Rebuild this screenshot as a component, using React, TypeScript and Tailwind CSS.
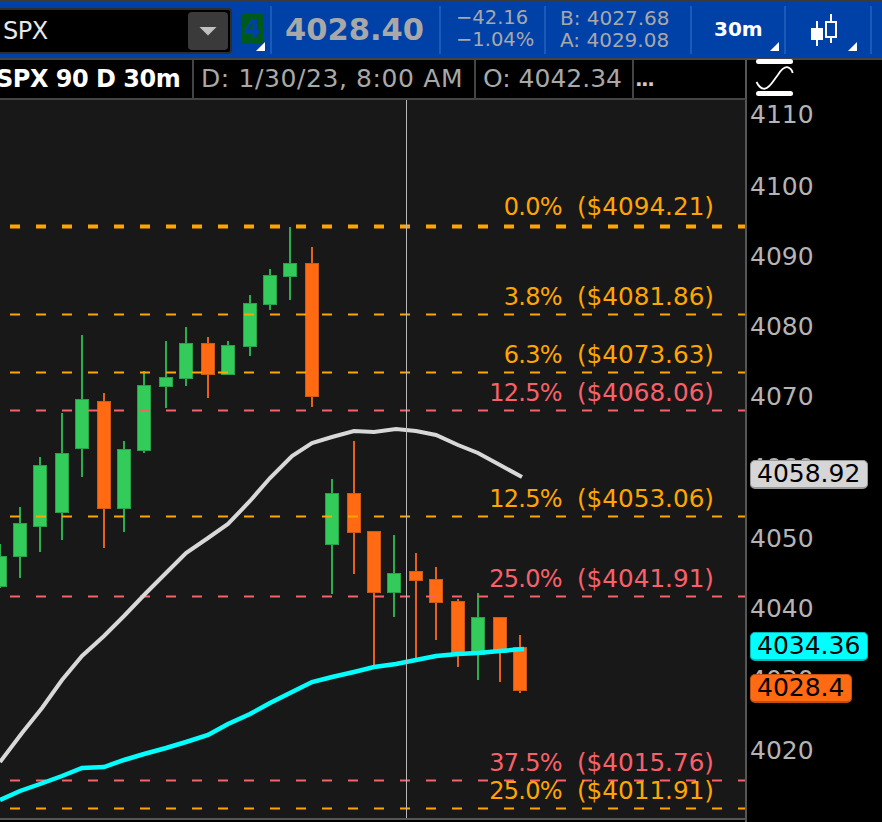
const FONT = "font-['DejaVu_Sans',sans-serif]";

type Candle = { x: number; up: boolean; wt: number; wb: number; bt: number; bb: number };

const candles: Candle[] = [
  { x: 0, up: true, wt: 544, wb: 588, bt: 556, bb: 587 },
  { x: 20, up: true, wt: 507, wb: 578, bt: 523, bb: 557 },
  { x: 40, up: true, wt: 457, wb: 552, bt: 465, bb: 527 },
  { x: 62, up: true, wt: 413, wb: 540, bt: 453, bb: 513 },
  { x: 82, up: true, wt: 335, wb: 477, bt: 399, bb: 449 },
  { x: 104, up: false, wt: 393, wb: 548, bt: 401, bb: 509 },
  { x: 124, up: true, wt: 441, wb: 532, bt: 449, bb: 509 },
  { x: 144, up: true, wt: 371, wb: 453, bt: 385, bb: 451 },
  { x: 166, up: true, wt: 341, wb: 408, bt: 377, bb: 387 },
  { x: 186, up: true, wt: 327, wb: 386, bt: 343, bb: 379 },
  { x: 208, up: false, wt: 337, wb: 398, bt: 343, bb: 375 },
  { x: 228, up: true, wt: 341, wb: 375, bt: 345, bb: 375 },
  { x: 250, up: true, wt: 295, wb: 356, bt: 303, bb: 347 },
  { x: 270, up: true, wt: 269, wb: 310, bt: 275, bb: 305 },
  { x: 290, up: true, wt: 227, wb: 300, bt: 263, bb: 277 },
  { x: 312, up: false, wt: 247, wb: 407, bt: 263, bb: 397 },
  { x: 332, up: true, wt: 479, wb: 594, bt: 493, bb: 545 },
  { x: 354, up: false, wt: 441, wb: 574, bt: 493, bb: 533 },
  { x: 374, up: false, wt: 531, wb: 667, bt: 531, bb: 593 },
  { x: 394, up: true, wt: 535, wb: 617, bt: 573, bb: 593 },
  { x: 416, up: false, wt: 553, wb: 658, bt: 571, bb: 581 },
  { x: 436, up: false, wt: 567, wb: 640, bt: 579, bb: 603 },
  { x: 458, up: false, wt: 599, wb: 667, bt: 601, bb: 653 },
  { x: 478, up: true, wt: 593, wb: 680, bt: 617, bb: 655 },
  { x: 500, up: false, wt: 617, wb: 682, bt: 617, bb: 653 },
  { x: 520, up: false, wt: 635, wb: 693, bt: 647, bb: 691 },
];

const ORANGE = "#ffa500";
const RED = "#f8606a";

const fibLines = [
  { y: 226.5, color: ORANGE, w: 4 },
  { y: 314.5, color: ORANGE, w: 2 },
  { y: 372.5, color: ORANGE, w: 2 },
  { y: 410.5, color: RED, w: 2 },
  { y: 516.5, color: ORANGE, w: 2 },
  { y: 596.5, color: RED, w: 2 },
  { y: 780.5, color: RED, w: 2 },
  { y: 808.5, color: ORANGE, w: 2 },
];

const fibLabels = [
  { top: 207, pct: "0.0%", price: "($4094.21)", red: false },
  { top: 297, pct: "3.8%", price: "($4081.86)", red: false },
  { top: 355, pct: "6.3%", price: "($4073.63)", red: false },
  { top: 393, pct: "12.5%", price: "($4068.06)", red: true },
  { top: 499, pct: "12.5%", price: "($4053.06)", red: false },
  { top: 579, pct: "25.0%", price: "($4041.91)", red: true },
  { top: 763, pct: "37.5%", price: "($4015.76)", red: true },
  { top: 791, pct: "25.0%", price: "($4011.91)", red: false },
];

const ticks = [
  { y: 115, v: "4110" },
  { y: 187, v: "4100" },
  { y: 257, v: "4090" },
  { y: 327, v: "4080" },
  { y: 397, v: "4070" },
  { y: 468, v: "4060" },
  { y: 539, v: "4050" },
  { y: 609, v: "4040" },
  { y: 680, v: "4030" },
  { y: 751, v: "4020" },
];

const whiteLine =
  "0,762 22,733 42,708 62,680 82,656 104,636 124,616 146,593 166,573 186,553 208,538 228,524 250,501 270,478 292,456 312,443 332,437 354,431 374,432 396,429 416,431 436,435 458,445 478,453 500,465 522,477";
const cyanLine =
  "0,800 20,791 40,784 62,776 82,768 104,767 124,760 144,754 166,748 186,742 208,735 228,724 250,714 270,703 292,692 312,682 332,677 354,672 374,667 396,664 416,660 436,656 458,654 478,653 500,651 524,649";

function CornerMark({ className }: { className: string }) {
  return <div className={`absolute w-[9px] h-[9px] bg-white [clip-path:polygon(100%_0,100%_100%,0_100%)] ${className}`} />;
}

function Sep() {
  return <div className="w-[2px] self-stretch my-[4px] bg-[#1a5ab8] shrink-0" />;
}

function Header() {
  return (
    <div className="relative flex h-[56px] bg-[#0041a8] shrink-0">
      <div className="flex items-center w-[236px] h-[46px] mt-[6px] ml-[-4px] bg-black border-2 border-[#2e2e2e] rounded-[4px] shrink-0">
        <span className="ml-[5px] text-[24px] tracking-[-0.5px] text-[#e8e8e8]">SPX</span>
        <div className="ml-auto mr-[2px] flex items-center justify-center w-[40px] h-[38px] bg-[#3a3a3a] rounded-[4px]">
          <div className="w-[18px] h-[9px] bg-[#c0c0c0] [clip-path:polygon(0_0,100%_0,50%_100%)]" />
        </div>
      </div>
      <div className="relative w-[38px] shrink-0">
        <div className="absolute left-[9px] top-[12px] w-[23px] h-[30px] rounded-[3px] bg-[#005a1c] flex items-center justify-center text-[24px] font-bold text-[#0041a8]">
          4
        </div>
        <CornerMark className="left-[24px] top-[40px]" />
      </div>
      <Sep />
      <div className="w-[167px] pl-[13px] flex items-center text-[30.5px] font-bold text-[#a8a8a8] shrink-0">4028.40</div>
      <Sep />
      <div className="w-[103px] pl-[15px] pb-[2px] flex flex-col justify-center text-[19.5px] leading-[22px] text-[#a8a8a8] shrink-0">
        <span>−42.16</span>
        <span>−1.04%</span>
      </div>
      <Sep />
      <div className="w-[144px] pl-[14px] pb-[2px] flex flex-col justify-center text-[20px] leading-[22px] text-[#a8a8a8] shrink-0">
        <span>B: 4027.68</span>
        <span>A: 4029.08</span>
      </div>
      <Sep />
      <div className="relative w-[92px] pl-[22px] pb-[2px] flex items-center text-[20px] font-bold text-white shrink-0">
        30m
        <CornerMark className="right-[5px] bottom-[7px]" />
      </div>
      <Sep />
      <div className="relative w-[84px] pl-[25px] flex items-center shrink-0">
        <svg width="26" height="32" viewBox="0 0 26 32" fill="none">
          <path d="M6 7V32" stroke="#fff" strokeWidth="2" />
          <rect x="0" y="14" width="12" height="12" fill="#fff" />
          <path d="M20 0V29" stroke="#fff" strokeWidth="2" />
          <rect x="15" y="8" width="10" height="15" fill="#0041a8" stroke="#fff" strokeWidth="2" />
        </svg>
        <CornerMark className="right-[13px] bottom-[7px]" />
      </div>
      <Sep />
    </div>
  );
}

function InfoCell({ className, children }: { className: string; children: React.ReactNode }) {
  return <div className={`flex items-center h-full border-r-2 border-[#444] whitespace-nowrap shrink-0 ${className}`}>{children}</div>;
}

function InfoBar() {
  return (
    <div className="flex h-[42px] bg-black border-t-2 border-[#444] shrink-0">
      <div className="flex w-[747px] h-full text-[25px] text-[#a8a8a8] border-b-2 border-r-2 border-b-[#444] border-r-[#555] shrink-0">
        <InfoCell className="w-[194px] text-[24px] tracking-[-0.5px] font-bold text-white overflow-hidden">
          <span className="ml-[-4px]">SPX 90 D 30m</span>
        </InfoCell>
        <InfoCell className="w-[282px] pl-[7px] tracking-[0.6px]">D: 1/30/23, 8:00 AM</InfoCell>
        <InfoCell className="w-[158px] pl-[7px]">O: 4042.34</InfoCell>
        <div className="flex items-center pl-[1px] text-[20px] tracking-[-1.5px] font-bold h-full text-[#cccccc]">...</div>
      </div>
    </div>
  );
}

function Chart() {
  return (
    <div className="relative w-[745px] h-[718px] bg-[#181818] overflow-hidden shrink-0">
      <svg className="absolute inset-0" width="745" height="718" viewBox="0 100 745 718">
        {candles.map((c) => (
          <g key={c.x}>
            <rect x={c.x - 1} y={c.wt} width="2" height={c.wb - c.wt} fill={c.up ? "#2aad4c" : "#e8611a"} />
            <rect
              x={c.x - 6.5}
              y={c.bt + 0.5}
              width="13"
              height={c.bb - c.bt - 1}
              fill={c.up ? "#33cc5a" : "#ff6a13"}
              stroke={c.up ? "#2aa04a" : "#cf5a18"}
            />
          </g>
        ))}
        {fibLines.map((l) => (
          <line
            key={l.y}
            x1="10"
            x2="745"
            y1={l.y}
            y2={l.y}
            stroke={l.color}
            strokeWidth={l.w}
            strokeDasharray="10 16"
          />
        ))}
        <polyline points={whiteLine} fill="none" stroke="#d8d8d8" strokeWidth="4" />
        <polyline points={cyanLine} fill="none" stroke="#00ffff" strokeWidth="4.5" />
        <line x1="406.5" x2="406.5" y1="100" y2="818" stroke="#b8b8b8" strokeWidth="1" />
      </svg>
      {fibLabels.map((f) => (
        <div
          key={f.top}
          className={`absolute right-[31px] -translate-y-1/2 flex gap-[15px] leading-[28px] whitespace-nowrap ${f.red ? "text-[#f8606a]" : "text-[#ffa500]"}`}
          style={{ top: f.top - 100 }}
        >
          <span className="text-[24px] tracking-[-0.7px]">{f.pct}</span>
          <span className="text-[24.7px]">{f.price}</span>
        </div>
      ))}
    </div>
  );
}

function PriceTag({ top, text, className }: { top: number; text: string; className: string }) {
  return (
    <div
      className={`absolute left-[3px] h-[29px] pl-[6px] flex items-center text-[25px] text-black rounded-[5px] border border-b-2 ${className}`}
      style={{ top: top - 100 }}
    >
      {text}
    </div>
  );
}

function Axis() {
  return (
    <div className="relative flex-1 h-[722px] bg-black border-l-2 border-[#555]">
      {ticks.map((t) => (
        <span
          key={t.v}
          className="absolute left-[3px] -translate-y-1/2 text-[25px] leading-[28px] text-[#b4b4b4]"
          style={{ top: t.y - 100 }}
        >
          {t.v}
        </span>
      ))}
      <PriceTag top={460} text="4058.92" className="w-[118px] bg-[#d6d6d6] border-[#9a9a9a]" />
      <PriceTag top={632} text="4034.36" className="w-[118px] bg-[#00ffff] border-[#00b8b8]" />
      <PriceTag top={674} text="4028.4" className="w-[102px] bg-[#ff6a13] border-[#c0500f]" />
    </div>
  );
}

export default function App() {
  return (
    <div className={`w-[882px] h-[822px] bg-black overflow-hidden ${FONT}`}>
      <div className="h-[2px] bg-[#3a3a3a]" />
      <Header />
      <div className="relative">
        <InfoBar />
        <svg className="absolute left-[755px] top-0" width="40" height="40" viewBox="0 0 40 40" fill="none">
          <rect x="1" y="1" width="37" height="5" rx="2.5" fill="#fff" />
          <rect x="1" y="33" width="37" height="5" rx="2.5" fill="#fff" />
          <path
            d="M1.5 24C4 29 7 31 10 30.7C15 30 18 23 23 16.7C26 12 30 8.5 33 9.3C35 10 37 12 37.7 15"
            stroke="#fff"
            strokeWidth="1.8"
          />
        </svg>
      </div>
      <div className="flex">
        <div className="flex flex-col">
          <Chart />
          <div className="h-[2px] bg-[#555]" />
        </div>
        <Axis />
      </div>
    </div>
  );
}
